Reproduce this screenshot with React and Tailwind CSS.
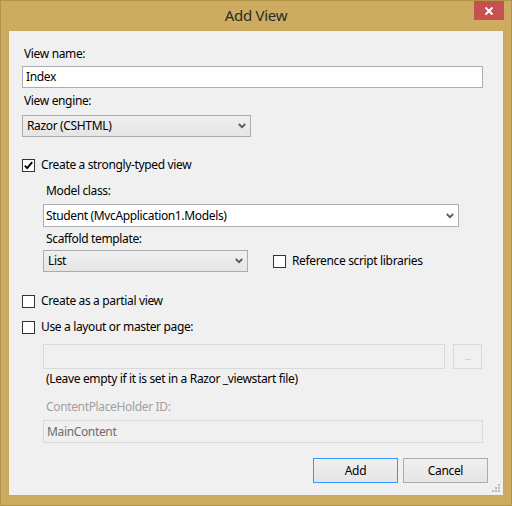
import React from "react";

const font = { fontFamily: '"Noto Sans", "Open Sans", sans-serif' };

function Chevron() {
  return (
    <svg width="8" height="6" viewBox="0 0 8 6" className="shrink-0">
      <polyline points="0.8,1 4,4.2 7.2,1" fill="none" stroke="#5a5a5a" strokeWidth="1.8" />
    </svg>
  );
}

function CheckBox({ checked }) {
  return (
    <span className="w-[13px] h-[13px] border border-[#333333] bg-white flex items-center justify-center shrink-0">
      {checked && (
        <svg width="11" height="11" viewBox="0 0 11 11">
          <polyline points="1.8,5.6 4.2,8.2 9.2,2.2" fill="none" stroke="#000000" strokeWidth="1.8" />
        </svg>
      )}
    </span>
  );
}

function Select({ value, className }) {
  return (
    <div
      className={`h-[22px] border border-[#acacac] bg-gradient-to-b from-[#f0f0f0] to-[#e5e5e5] flex items-center justify-between pl-[4px] pr-[4px] ${className}`}
    >
      <span>{value}</span>
      <Chevron />
    </div>
  );
}

export default function App() {
  return (
    <div
      className="w-[512px] h-[506px] bg-[#cdab60] border border-[#b39347] flex flex-col text-[12px] leading-[16px] tracking-[-0.35px] text-black"
      style={font}
    >
      {/* title bar */}
      <div className="h-[29px] flex items-start relative">
        <div className="flex-1 text-center text-[15px] leading-[20px] pt-[4px] tracking-[-0.3px] text-[#2b2b2b]">Add View</div>
        <div className="absolute right-[7px] top-0 w-[30px] h-[19px] bg-[#c75050] flex items-center justify-center">
          <svg width="10" height="10" viewBox="0 0 10 10">
            <path d="M1.5 1.5 L8.5 8.5 M8.5 1.5 L1.5 8.5" stroke="#ffffff" strokeWidth="2" />
          </svg>
        </div>
      </div>

      {/* client area */}
      <div className="mx-[7px] h-[466px] bg-[#f0f0f0] border border-[#c7a85d] flex flex-col pl-[13px] pt-[15px] relative">
        <div className="pl-[2px]">View name:</div>
        <div className="mt-[4px] w-[461px] h-[22px] border border-[#abadb3] bg-white flex items-center pl-[3px]">Index</div>

        <div className="mt-[5px] pl-[2px]">View engine:</div>
        <Select value="Razor (CSHTML)" className="mt-[6px] w-[229px]" />

        <div className="mt-[20px] flex items-center gap-[6px] h-[16px]">
          <CheckBox checked />
          <span>Create a strongly-typed view</span>
        </div>

        <div className="pl-[21px] flex flex-col">
          <div className="mt-[10px] pl-[3px]">Model class:</div>
          <div className="mt-[5px] w-[416px] h-[23px] border border-[#abadb3] bg-white flex items-center justify-between pl-[2px] pr-[4px]">
            <span>Student (MvcApplication1.Models)</span>
            <Chevron />
          </div>

          <div className="mt-[4px] pl-[3px]">Scaffold template:</div>
          <div className="mt-[3px] flex items-center">
            <Select value="List" className="w-[205px]" />
            <div className="ml-[25px] flex items-center gap-[6px]">
              <CheckBox />
              <span>Reference script libraries</span>
            </div>
          </div>
        </div>

        <div className="mt-[21px] flex items-center gap-[6px] h-[16px]">
          <CheckBox />
          <span>Create as a partial view</span>
        </div>
        <div className="mt-[10px] flex items-center gap-[6px] h-[16px]">
          <CheckBox />
          <span>Use a layout or master page:</span>
        </div>

        <div className="pl-[21px] flex flex-col">
          <div className="mt-[9px] flex items-center gap-[8px]">
            <div className="w-[402px] h-[25px] border border-[#d9d9d9] bg-[#f0f0f0]" />
            <div className="w-[29px] h-[25px] border border-[#d9d9d9] bg-[#f0f0f0] flex items-center justify-center text-[#b5b5b5] text-[9px] leading-[10px]">
              ...
            </div>
          </div>
          <div className="mt-[2px] pl-[3px]">(Leave empty if it is set in a Razor _viewstart file)</div>

          <div className="mt-[12px] pl-[3px] text-[#a0a0a0]">ContentPlaceHolder ID:</div>
          <div className="mt-[5px] w-[440px] h-[23px] border border-[#d9d9d9] bg-[#f0f0f0] flex items-center pl-[3px] text-[#6d6d6d]">
            MainContent
          </div>
        </div>

        <div className="mt-[15px] flex justify-end gap-[5px] pr-[15px]">
          <div className="w-[85px] h-[25px] border border-[#3399ff] bg-gradient-to-b from-[#f0f0f0] to-[#e5e5e5] flex items-center justify-center">
            Add
          </div>
          <div className="w-[85px] h-[25px] border border-[#acacac] bg-gradient-to-b from-[#f0f0f0] to-[#e5e5e5] flex items-center justify-center">
            Cancel
          </div>
        </div>

        {/* resize grip */}
        <svg width="8" height="8" viewBox="0 0 8 8" className="absolute right-[3px] bottom-[3px]">
          <rect x="6" y="0" width="2" height="2" fill="#b8b8b8" />
          <rect x="3" y="3" width="2" height="2" fill="#b8b8b8" />
          <rect x="6" y="3" width="2" height="2" fill="#b8b8b8" />
          <rect x="0" y="6" width="2" height="2" fill="#b8b8b8" />
          <rect x="3" y="6" width="2" height="2" fill="#b8b8b8" />
          <rect x="6" y="6" width="2" height="2" fill="#b8b8b8" />
        </svg>
      </div>
    </div>
  );
}
